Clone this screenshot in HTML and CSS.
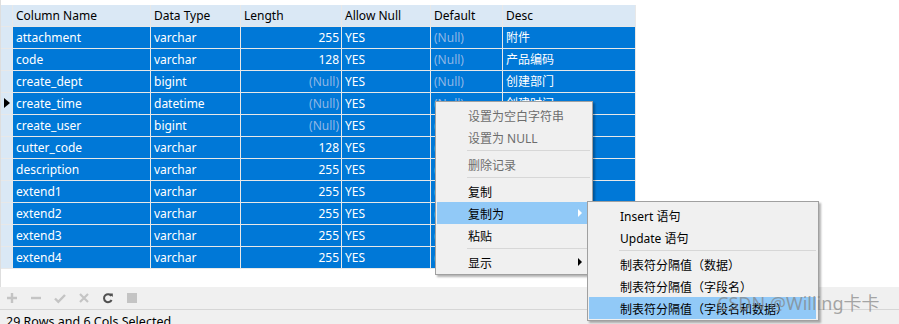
FILE: index.html
```html
<!DOCTYPE html>
<html lang="zh-CN">
<head>
    <meta charset="UTF-8">
    <title>Table Design</title>
    <link rel="stylesheet" href="styles.css">
</head>
<body>
    <div class="page">
        <div class="grid-area">
            <div class="grid">
                <div class="hd rowhead"></div>
                <div class="hd">Column Name</div>
                <div class="hd">Data Type</div>
                <div class="hd">Length</div>
                <div class="hd">Allow Null</div>
                <div class="hd">Default</div>
                <div class="hd">Desc</div>

                <div class="rowhead"></div><div class="cell">attachment</div><div class="cell">varchar</div><div class="cell num">255</div><div class="cell">YES</div><div class="cell null">(Null)</div><div class="cell">附件</div>
                <div class="rowhead"></div><div class="cell">code</div><div class="cell">varchar</div><div class="cell num">128</div><div class="cell">YES</div><div class="cell null">(Null)</div><div class="cell">产品编码</div>
                <div class="rowhead"></div><div class="cell">create_dept</div><div class="cell">bigint</div><div class="cell num null">(Null)</div><div class="cell">YES</div><div class="cell null">(Null)</div><div class="cell">创建部门</div>
                <div class="rowhead current"><span class="pointer"></span></div><div class="cell">create_time</div><div class="cell">datetime</div><div class="cell num null">(Null)</div><div class="cell">YES</div><div class="cell null">(Null)</div><div class="cell">创建时间</div>
                <div class="rowhead"></div><div class="cell">create_user</div><div class="cell">bigint</div><div class="cell num null">(Null)</div><div class="cell">YES</div><div class="cell null">(Null)</div><div class="cell">创建人</div>
                <div class="rowhead"></div><div class="cell">cutter_code</div><div class="cell">varchar</div><div class="cell num">128</div><div class="cell">YES</div><div class="cell null">(Null)</div><div class="cell">刀具编码</div>
                <div class="rowhead"></div><div class="cell">description</div><div class="cell">varchar</div><div class="cell num">255</div><div class="cell">YES</div><div class="cell null">(Null)</div><div class="cell">描述</div>
                <div class="rowhead"></div><div class="cell">extend1</div><div class="cell">varchar</div><div class="cell num">255</div><div class="cell">YES</div><div class="cell null">(Null)</div><div class="cell">扩展1</div>
                <div class="rowhead"></div><div class="cell">extend2</div><div class="cell">varchar</div><div class="cell num">255</div><div class="cell">YES</div><div class="cell null">(Null)</div><div class="cell">扩展2</div>
                <div class="rowhead"></div><div class="cell">extend3</div><div class="cell">varchar</div><div class="cell num">255</div><div class="cell">YES</div><div class="cell null">(Null)</div><div class="cell">扩展3</div>
                <div class="rowhead"></div><div class="cell">extend4</div><div class="cell">varchar</div><div class="cell num">255</div><div class="cell">YES</div><div class="cell null">(Null)</div><div class="cell">扩展4</div>
            </div>
        </div>

        <div class="toolbar">
            <svg class="tool" viewBox="0 0 12 12"><path d="M6 1v10M1 6h10" stroke="#c4c4c4" stroke-width="2.4"/></svg>
            <svg class="tool" viewBox="0 0 12 12"><path d="M1 6h10" stroke="#c4c4c4" stroke-width="2.4"/></svg>
            <svg class="tool" viewBox="0 0 12 12"><path d="M1 6.5l3.3 3.3L11 3" fill="none" stroke="#c4c4c4" stroke-width="2.4"/></svg>
            <svg class="tool" viewBox="0 0 12 12"><path d="M2 2l8 8M10 2l-8 8" stroke="#c4c4c4" stroke-width="2.2"/></svg>
            <svg class="tool" viewBox="0 0 12 12"><path d="M9.4 4A4 4 0 1 0 9.6 8" fill="none" stroke="#505050" stroke-width="2"/><path d="M7.2 1.4h3.6v3.6z" fill="#505050"/></svg>
            <svg class="tool" viewBox="0 0 12 12"><rect x="1" y="1" width="10" height="10" fill="#c4c4c4"/></svg>
        </div>

        <div class="status">29 Rows and 6 Cols Selected</div>

        <div class="menu main-menu">
            <div class="item disabled">设置为空白字符串</div>
            <div class="item disabled">设置为 NULL</div>
            <div class="sep"></div>
            <div class="item disabled">删除记录</div>
            <div class="sep"></div>
            <div class="item">复制</div>
            <div class="item active sub">复制为</div>
            <div class="item">粘贴</div>
            <div class="sep"></div>
            <div class="item sub">显示</div>
        </div>

        <div class="menu sub-menu">
            <div class="item">Insert 语句</div>
            <div class="item">Update 语句</div>
            <div class="sep"></div>
            <div class="item">制表符分隔值（数据）</div>
            <div class="item">制表符分隔值（字段名）</div>
            <div class="item active">制表符分隔值（字段名和数据）</div>
        </div>

        <div class="watermark">CSDN @Willing卡卡</div>
    </div>
</body>
</html>
```

FILE: styles.css
```css
body {
    margin: 0;
    font-family: 'Noto Sans', 'Noto Sans CJK SC', sans-serif;
    font-size: 12px;
    color: #000;
    background-color: #ffffff;
}

.page {
    position: relative;
    width: 899px;
    height: 324px;
    overflow: hidden;
}

.grid-area {
    height: 287px;
    padding-top: 5px;
    box-sizing: border-box;
    background-color: #ffffff;
    border-left: 1px solid #dedede;
}

.grid {
    display: grid;
    grid-template-columns: 11px 137px 89px 100px 88px 71px 132px;
    grid-auto-rows: 21px;
    gap: 1px;
    width: 635px;
    background-color: #e8e8e8;
    padding-bottom: 1px;
}

.hd {
    background-color: #dae8f5;
    padding-left: 3px;
    line-height: 21px;
    white-space: nowrap;
    overflow: hidden;
}

.rowhead {
    background-color: #dae8f5;
    position: relative;
}

.pointer {
    position: absolute;
    left: 3px;
    top: 5px;
    border-left: 6px solid #000;
    border-top: 5px solid transparent;
    border-bottom: 5px solid transparent;
}

.cell {
    background-color: #0078d7;
    color: #ffffff;
    padding: 0 3px;
    line-height: 21px;
    white-space: nowrap;
    overflow: hidden;
}

.cell.num {
    text-align: right;
    padding-right: 2px;
}

.cell.null {
    color: #8fb7e6;
}

.toolbar {
    height: 22px;
    background-color: #f0f0f0;
    display: flex;
    align-items: center;
    gap: 12px;
    padding-left: 6px;
    border-bottom: 1px solid #d6d6d6;
}

.tool {
    width: 12px;
    height: 12px;
}

.status {
    height: 14px;
    background-color: #f0f0f0;
    padding: 3px 0 0 6px;
    font-size: 12.5px;
    line-height: 18px;
}

.menu {
    position: absolute;
    background-color: #f0f0f0;
    border: 1px solid #a0a0a0;
    box-shadow: 2px 2px 2px rgba(0, 0, 0, 0.3);
    padding: 2px 2px 1px 1px;
}

.main-menu {
    left: 435px;
    top: 101px;
    width: 153px;
}

.sub-menu {
    left: 587px;
    top: 201px;
    width: 227px;
}

.item {
    position: relative;
    height: 20px;
    padding-top: 2px;
    line-height: 21px;
    padding-left: 31px;
    white-space: nowrap;
}

.item.disabled {
    color: #6d6d6d;
}

.item.active {
    background-color: #91c9f7;
}

.item.sub::after {
    content: "";
    position: absolute;
    right: 8px;
    top: 7px;
    border-left: 4px solid #000;
    border-top: 4px solid transparent;
    border-bottom: 4px solid transparent;
}

.item.active.sub::after {
    border-left-color: #ffffff;
}

.sep {
    height: 1px;
    margin: 2px 0 2px 30px;
    background-color: #d7d7d7;
}

.watermark {
    position: absolute;
    left: 717px;
    top: 289px;
    font-size: 18px;
    color: rgba(130, 130, 130, 0.7);
    white-space: nowrap;
    pointer-events: none;
}
```
